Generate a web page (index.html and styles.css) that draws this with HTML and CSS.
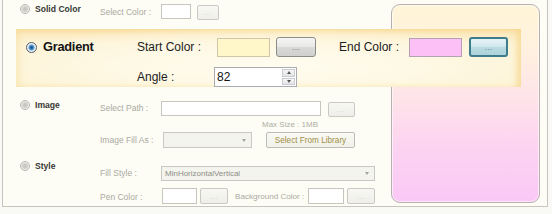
FILE: index.html
```html
<!DOCTYPE html>
<html>
<head>
<meta charset="utf-8">
<title>Fill Settings</title>
<link rel="stylesheet" href="styles.css">
</head>
<body>
<div class="frame">
  <div class="row row-solid">
    <div class="opt"><span class="radio"></span><span class="opt-name">Solid Color</span></div>
    <span class="lbl">Select Color :</span>
    <span class="box box-solid"></span>
    <span class="btn btn-dis btn-solid">...</span>
  </div>

  <div class="band">
    <div class="band-row">
      <div class="opt-big"><span class="radio radio-on"></span><span class="opt-big-name">Gradient</span></div>
      <span class="lbl-big">Start Color :</span>
      <span class="swatch swatch-start"></span>
      <span class="btn btn-start">...</span>
      <span class="lbl-big lbl-end">End Color :</span>
      <span class="swatch swatch-end"></span>
      <span class="btn btn-end">...</span>
    </div>
    <div class="band-row">
      <div class="opt-big"></div>
      <span class="lbl-big">Angle :</span>
      <div class="num">
        <span class="num-val">82</span>
        <span class="spin"><span class="spin-btn"><i class="tri-up"></i></span><span class="spin-btn"><i class="tri-down"></i></span></span>
      </div>
    </div>
  </div>

  <div class="preview"></div>

  <div class="lower">
    <div class="row row-img">
      <div class="opt"><span class="radio"></span><span class="opt-name">Image</span></div>
      <span class="lbl lbl-mt3">Select Path :</span>
      <span class="box box-path"></span>
      <span class="btn btn-dis btn-path">...</span>
    </div>
    <div class="maxsize">Max Size : 1MB</div>
    <div class="row row-fill">
      <div class="opt"></div>
      <span class="lbl lbl-mt3 lbl-w63">Image Fill As :</span>
      <span class="select select-fill"><span class="select-text"></span><i class="tri-down tri-sel"></i></span>
      <span class="btn btn-lib">Select From Library</span>
    </div>
    <div class="row row-style">
      <div class="opt"><span class="radio"></span><span class="opt-name">Style</span></div>
      <span class="lbl lbl-mt7">Fill Style :</span>
      <span class="select select-style"><span class="select-text">MinHorizontalVertical</span><i class="tri-down tri-sel"></i></span>
    </div>
    <div class="row row-pen">
      <div class="opt"></div>
      <span class="lbl lbl-mt4 lbl-w62">Pen Color :</span>
      <span class="box box-pen"></span>
      <span class="btn btn-dis btn-small">...</span>
      <span class="lbl lbl-mt4 lbl-bg">Background Color :</span>
      <span class="box box-pen"></span>
      <span class="btn btn-dis btn-small">...</span>
    </div>
  </div>
</div>
</body>
</html>
```
FILE: styles.css
```css
html, body {
  margin: 0;
  padding: 0;
}

body {
  width: 552px;
  height: 214px;
  overflow: hidden;
  background: #f9f9f6;
  font-family: "Liberation Sans", Arial, sans-serif;
}

.frame {
  margin-left: 2px;
  width: 544px;
  height: 206px;
  border: 1px solid #c6c6be;
  border-top: none;
  background: #fdfdf6;
  display: grid;
  grid-template-columns: 388px 130px 19px 7px;
  grid-template-rows: 29px 58px 1fr;
}

.row {
  display: flex;
  align-items: flex-start;
}

.row-solid {
  grid-column: 1;
  grid-row: 1;
  padding: 4px 0 0 17px;
}

/* option cells */
.opt {
  width: 80px;
  flex: none;
  display: flex;
  align-items: flex-start;
  gap: 5px;
}

.opt-name {
  font-weight: bold;
  font-size: 8.6px;
  line-height: 10px;
  color: #383834;
  white-space: nowrap;
}

.radio {
  flex: none;
  width: 10px;
  height: 10px;
  box-sizing: border-box;
  border-radius: 50%;
  border: 1px solid #b9b9b2;
  background: radial-gradient(circle at 50% 50%, #c4c4bd 0, #cfcfc8 2.4px, #e9e9e3 3.4px, #f5f5f0 100%);
}

.radio-on {
  width: 11px;
  height: 11px;
  margin-top: 5px;
  border: 1px solid #4e5b69;
  background: radial-gradient(circle at 50% 50%, #0e4a88 0, #2f78ba 1.6px, #6ea6d2 2.6px, #dfe9f1 3.4px, #f4f6f8 4.5px);
}

.lbl {
  flex: none;
  width: 61px;
  font-size: 8.5px;
  line-height: 10px;
  color: #aaa9a0;
  white-space: nowrap;
}

.row-solid .lbl { margin-top: 3px; }
.lbl-mt3 { margin-top: 3px; }
.lbl-mt4 { margin-top: 4px; }
.lbl-mt7 { margin-top: 7px; }
.lbl-w63 { width: 63px; }
.lbl-w62 { width: 62px; }
.lbl-bg { width: 73px; margin-left: 7px; font-size: 8.1px; }

.box {
  flex: none;
  box-sizing: border-box;
  background: #ffffff;
  border: 1px solid #c6c6be;
}

.box-solid { width: 30px; height: 15px; }
.box-path { width: 160px; height: 15px; margin-top: 1px; }
.box-pen { width: 35px; height: 16px; }
.row-pen .box-pen + .btn { margin-left: 3px; }
.lbl-bg + .box-pen { width: 36px; }

.btn {
  flex: none;
  box-sizing: border-box;
  display: flex;
  align-items: center;
  justify-content: center;
  font-size: 8px;
  letter-spacing: 0.5px;
  border-radius: 3px;
  white-space: nowrap;
}

.btn-dis {
  border: 1px solid #cacac2;
  background: linear-gradient(#f7f7f3, #efefea);
  color: #d3d3cc;
  border-radius: 2px;
}

.btn-solid { width: 22px; height: 15px; margin-left: 6px; margin-top: 1px; }
.btn-path { width: 27px; height: 15px; margin-left: 7px; margin-top: 2px; }
.btn-small { width: 28px; height: 16px; }

/* gradient band */
.band {
  grid-column: 1 / 3;
  grid-row: 2;
  z-index: 1;
  margin-left: 13px;
  height: 58px;
  box-sizing: border-box;
  padding: 8px 0 0 10px;
  display: flex;
  flex-direction: column;
  gap: 10px;
  background-color: #fdf3d6;
  background-image:
    radial-gradient(ellipse 60% 70% at 50% 64%, #fffcf0 0%, #fef9e6 45%, rgba(253, 243, 214, 0) 100%),
    linear-gradient(to bottom, #fae0a4 0px, #fcebc3 6px, rgba(253, 243, 214, 0) 14px);
  box-shadow: inset -6px 0 6px -2px rgba(245, 212, 135, 0.75), inset 6px 0 8px -4px rgba(246, 220, 150, 0.6);
}

.band-row {
  display: flex;
  align-items: flex-start;
  height: 20px;
}

.opt-big {
  flex: none;
  width: 111px;
  display: flex;
  align-items: flex-start;
  gap: 6px;
}

.opt-big-name {
  font-weight: bold;
  font-size: 12.8px;
  line-height: 20px;
  color: #141414;
  letter-spacing: -0.25px;
}

.lbl-big {
  flex: none;
  width: 77px;
  font-size: 12px;
  line-height: 20px;
  color: #1c1c1c;
  white-space: nowrap;
}

.lbl-end { width: 70px; margin-left: 23px; }

.swatch {
  flex: none;
  box-sizing: border-box;
  width: 53px;
  height: 19px;
  margin-top: 1px;
}

.swatch-start {
  margin-left: 3px;
  background: #fff6c9;
  border: 1px solid #cfc7a8;
}

.swatch-end {
  background: #fcc0f6;
  border: 1px solid #b3a2b1;
}

.btn-start {
  width: 40px;
  height: 20px;
  margin-left: 6px;
  border: 1px solid #8c8c8a;
  background: linear-gradient(#f5f5f4 0%, #e8e8e6 48%, #d9d9d7 52%, #d0d0ce 100%);
  color: #5a5a5a;
}

.btn-end {
  width: 39px;
  height: 20px;
  margin-left: 7px;
  border: 2px solid #3f7c8a;
  background: linear-gradient(#e6f3f6 0%, #d0e7ec 48%, #b9dbe2 52%, #aed3db 100%);
  color: #4f6a70;
}

.num {
  flex: none;
  box-sizing: border-box;
  width: 83px;
  height: 20px;
  background: #ffffff;
  border: 1px solid #a9abb0;
  display: flex;
  align-items: center;
  justify-content: space-between;
  padding: 0 1px 0 2px;
}

.num-val {
  font-size: 12px;
  line-height: 16px;
  color: #111;
}

.spin {
  display: flex;
  flex-direction: column;
  gap: 1px;
  width: 13px;
  height: 16px;
}

.spin-btn {
  flex: 1;
  box-sizing: border-box;
  border: 1px solid #c9ccd2;
  background: linear-gradient(#f6f6f6, #e4e4e4);
  display: flex;
  align-items: center;
  justify-content: center;
}

.tri-up, .tri-down {
  display: block;
  width: 0;
  height: 0;
  border-left: 2.5px solid transparent;
  border-right: 2.5px solid transparent;
}

.tri-up { border-bottom: 3px solid #555; }
.tri-down { border-top: 3px solid #555; }

/* preview */
.preview {
  grid-column: 2 / 4;
  grid-row: 1 / 4;
  align-self: start;
  margin-top: 4px;
  height: 199px;
  box-sizing: border-box;
  border: 1px solid #b9afb1;
  border-radius: 9px;
  background: linear-gradient(180deg, #fff5d7 0%, #fff1df 22%, #fee3e9 48%, #fcd3f1 72%, #fac8f6 100%);
  box-shadow: inset 0 0 0 1px rgba(255, 255, 255, 0.6);
}

/* lower section */
.lower {
  grid-column: 1;
  grid-row: 3;
  display: flex;
  flex-direction: column;
  padding-left: 17px;
}

.row-img { margin-top: 13px; }

.maxsize {
  margin-top: 3px;
  width: 298px;
  text-align: right;
  font-size: 8px;
  line-height: 10px;
  color: #aeada4;
}

.row-fill { margin-top: 2px; }
.row-style { margin-top: 13px; }
.row-pen { margin-top: 7px; }

.select {
  flex: none;
  box-sizing: border-box;
  display: flex;
  align-items: center;
  justify-content: space-between;
  border: 1px solid #c9c9c1;
  background: #f4f4ef;
  padding: 0 5px 0 3px;
}

.select-fill { width: 89px; height: 16px; }
.select-style { width: 214px; height: 15px; margin-top: 5px; }

.select-text {
  font-size: 8px;
  color: #8e8e86;
  white-space: nowrap;
}

.tri-sel {
  border-top-color: #a4a49c;
}

.btn-lib {
  width: 89px;
  height: 16px;
  margin-left: 14px;
  border: 1px solid #bdbdb5;
  border-radius: 2px;
  background: linear-gradient(#fafaf5, #f1f1ea);
  color: #a08f45;
  font-size: 8.2px;
  letter-spacing: 0;
}
```
